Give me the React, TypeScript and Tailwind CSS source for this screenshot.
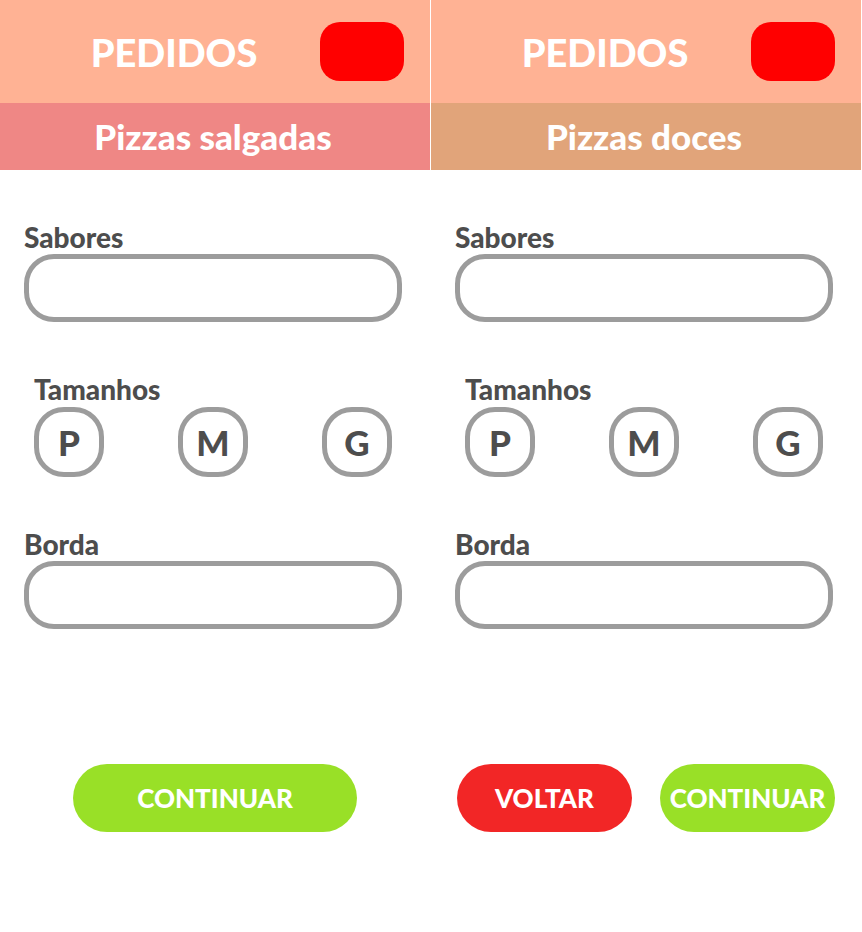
import { useState } from "react";

type Action = { label: string; className: string };

type ScreenProps = {
  id: string;
  subtitle: string;
  barClass: string;
  actionsClass: string;
  actions: Action[];
};

const SIZES = ["P", "M", "G"];

function Field({ id, label }: { id: string; label: string }) {
  return (
    <div className="flex flex-col px-6">
      <label htmlFor={id} className="h-8 text-[28px] leading-[30px]">
        {label}
      </label>
      <input
        id={id}
        type="text"
        className="h-[68px] w-full rounded-[30px] border-5 border-[#9c9c9c] bg-white px-6 text-[28px] outline-none"
      />
    </div>
  );
}

function SizePicker() {
  const [selected, setSelected] = useState<string | null>(null);
  return (
    <fieldset className="px-[34px]">
      <legend className="h-8 text-[28px] leading-[30px]">Tamanhos</legend>
      <div className="flex h-[71px] items-end justify-between">
        {SIZES.map((size) => (
          <button
            key={size}
            type="button"
            aria-pressed={selected === size}
            onClick={() => setSelected(size)}
            className="size-[70px] rounded-[30px] border-5 border-[#9c9c9c] text-[35px] leading-none"
          >
            {size}
          </button>
        ))}
      </div>
    </fieldset>
  );
}

function OrderScreen({ id, subtitle, barClass, actionsClass, actions }: ScreenProps) {
  return (
    <section>
      <header>
        <div className="flex h-[103px] items-center bg-[#ffb294] pr-[26px] pl-7 text-white">
          <h1 className="flex-1 text-center text-[38px] leading-none">PEDIDOS</h1>
          <div className="h-[59px] w-[84px] rounded-[20px] bg-[#ff0000]" />
        </div>
        <h2 className={`flex h-[67px] items-center justify-center pr-1 text-[35px] leading-none text-white ${barClass}`}>
          {subtitle}
        </h2>
      </header>
      <form className="pt-[52px]" onSubmit={(event) => event.preventDefault()}>
        <div className="flex flex-col gap-[52px] pr-1">
          <Field id={`${id}-sabores`} label="Sabores" />
          <SizePicker />
          <Field id={`${id}-borda`} label="Borda" />
        </div>
        <div className={`mt-[135px] flex gap-7 ${actionsClass}`}>
          {actions.map((action) => (
            <button
              key={action.label}
              type="button"
              className={`h-[68px] flex-1 rounded-full text-[26px] leading-none text-white ${action.className}`}
            >
              {action.label}
            </button>
          ))}
        </div>
      </form>
    </section>
  );
}

export default function App() {
  return (
    <main className="grid min-h-screen grid-cols-2 gap-px bg-white pr-px font-['Lato',sans-serif] font-black text-[#4d4d4d]">
      <OrderScreen
        id="salgadas"
        subtitle="Pizzas salgadas"
        barClass="bg-[#ef8785]"
        actionsClass="px-[73px]"
        actions={[{ label: "CONTINUAR", className: "bg-[#99e027]" }]}
      />
      <OrderScreen
        id="doces"
        subtitle="Pizzas doces"
        barClass="bg-[#e1a47a]"
        actionsClass="px-[26px]"
        actions={[
          { label: "VOLTAR", className: "bg-[#f22626]" },
          { label: "CONTINUAR", className: "bg-[#99e027]" },
        ]}
      />
    </main>
  );
}
